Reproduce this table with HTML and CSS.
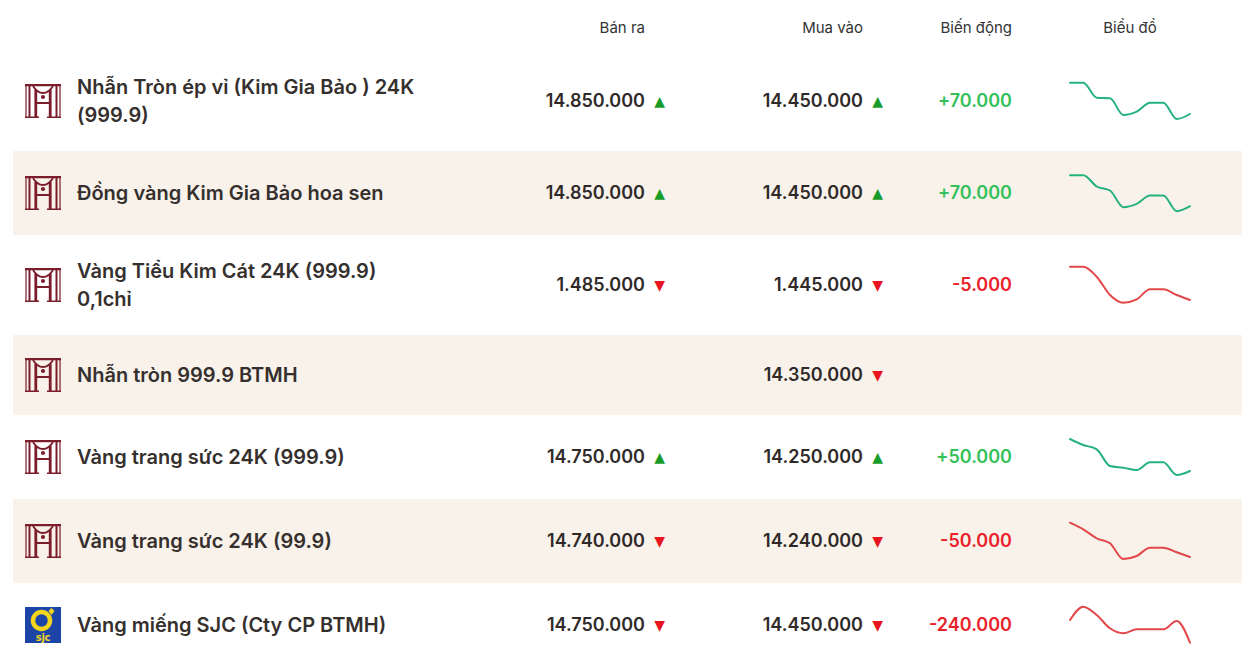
FILE: index.html
```html
<!DOCTYPE html>
<html lang="vi">
<head>
<meta charset="utf-8">
<title>Giá vàng</title>
<link rel="stylesheet" href="styles.css">
</head>
<body>
<svg class="defs" width="0" height="0" aria-hidden="true">
  <defs>
    <symbol id="mh" viewBox="0 0 36 34">
      <g fill="none" stroke="currentColor">
        <path d="M0 1.2H36" stroke-width="2.2"/>
        <path d="M1 1.2V33M35 1.2V33" stroke-width="1.2"/>
        <path d="M4.5 2V33M31.5 2V33" stroke-width="2"/>
        <path d="M8 2C11 7 14 9 18 9C22 9 25 7 28 2" stroke-width="1.8"/>
        <path d="M10.8 6V33M25.2 6V33" stroke-width="2.8"/>
        <path d="M10.8 19H25.2" stroke-width="2"/>
        <path d="M0 33.2H14M22 33.2H36" stroke-width="1.4"/>
      </g>
      <circle cx="18" cy="13" r="2.1" fill="currentColor"/>
    </symbol>
  </defs>
</svg>

<div class="board">
  <div class="row head">
    <div class="c-name"></div>
    <div class="c-price h-price">Bán ra</div>
    <div class="c-price h-price">Mua vào</div>
    <div class="c-change">Biến động</div>
    <div class="c-chart">Biểu đồ</div>
  </div>

  <div class="row item">
    <div class="c-name"><svg class="logo mh"><use href="#mh"/></svg><span class="pname">Nhẫn Tròn ép vỉ (Kim Gia Bảo ) 24K (999.9)</span></div>
    <div class="c-price"><span class="num">14.850.000</span><span class="arr up">▲</span></div>
    <div class="c-price"><span class="num">14.450.000</span><span class="arr up">▲</span></div>
    <div class="c-change pos">+70.000</div>
    <div class="c-chart"><svg class="spark green" viewBox="0 0 120 40"><path d="M0 1.7C4.4 1.7 8.9 1.7 13.3 1.7C17.8 1.7 22.3 16.3 26.7 16.7C31.1 17.1 35.6 16.9 40 17.3C44.4 17.7 48.9 34 53.3 34C57.8 34 62.2 32.75 66.7 30.7C71.1 28.65 75.6 21.7 80 21.7C84.4 21.7 88.9 21.7 93.3 21.7C97.8 21.7 102.2 38 106.7 38C111.1 38 115.6 35.5 120 33"/></svg></div>
  </div>

  <div class="row item alt">
    <div class="c-name"><svg class="logo mh"><use href="#mh"/></svg><span class="pname">Đồng vàng Kim Gia Bảo hoa sen</span></div>
    <div class="c-price"><span class="num">14.850.000</span><span class="arr up">▲</span></div>
    <div class="c-price"><span class="num">14.450.000</span><span class="arr up">▲</span></div>
    <div class="c-change pos">+70.000</div>
    <div class="c-chart"><svg class="spark green" viewBox="0 0 120 40"><path d="M0 2.2C4.4 2.2 8.9 2.2 13.3 2.2C17.8 2.2 22.3 10.95 26.7 13.5C31.1 16.05 35.6 14.83 40 17.5C44.4 20.17 48.9 34.2 53.3 34.2C57.8 34.2 62.2 32.75 66.7 30.8C71.1 28.85 75.6 22.5 80 22.5C84.4 22.5 88.9 22.5 93.3 22.5C97.8 22.5 102.2 38.2 106.7 38.2C111.1 38.2 115.6 35.7 120 33.2"/></svg></div>
  </div>

  <div class="row item">
    <div class="c-name"><svg class="logo mh"><use href="#mh"/></svg><span class="pname">Vàng Tiểu Kim Cát 24K (999.9) 0,1chỉ</span></div>
    <div class="c-price"><span class="num">1.485.000</span><span class="arr down">▼</span></div>
    <div class="c-price"><span class="num">1.445.000</span><span class="arr down">▼</span></div>
    <div class="c-change neg">-5.000</div>
    <div class="c-chart"><svg class="spark red" viewBox="0 0 120 40"><path d="M0 1.7C4.4 1.7 8.9 1.7 13.3 1.7C17.8 1.7 22.3 6.98 26.7 11.7C31.1 16.42 35.6 25.67 40 30C44.4 34.33 48.9 37.7 53.3 37.7C57.8 37.7 62.2 36.53 66.7 34.3C71.1 32.07 75.6 24.3 80 24.3C84.4 24.3 88.9 24.3 93.3 24.3C97.8 24.3 102.2 28.22 106.7 30C111.1 31.78 115.6 33.39 120 35"/></svg></div>
  </div>

  <div class="row item alt">
    <div class="c-name"><svg class="logo mh"><use href="#mh"/></svg><span class="pname">Nhẫn tròn 999.9 BTMH</span></div>
    <div class="c-price"></div>
    <div class="c-price"><span class="num">14.350.000</span><span class="arr down">▼</span></div>
    <div class="c-change"></div>
    <div class="c-chart"></div>
  </div>

  <div class="row item">
    <div class="c-name"><svg class="logo mh"><use href="#mh"/></svg><span class="pname">Vàng trang sức 24K (999.9)</span></div>
    <div class="c-price"><span class="num">14.750.000</span><span class="arr up">▲</span></div>
    <div class="c-price"><span class="num">14.250.000</span><span class="arr up">▲</span></div>
    <div class="c-change pos">+50.000</div>
    <div class="c-chart"><svg class="spark green" viewBox="0 0 120 40"><path d="M0 2C4.4 4.14 8.9 6.28 13.3 8C17.8 9.72 22.3 9.43 26.7 12.3C31.1 15.17 35.6 27.87 40 29C44.4 30.13 48.9 30.03 53.3 30.7C57.8 31.37 62.2 33 66.7 33C71.1 33 75.6 25.3 80 25.3C84.4 25.3 88.9 25.3 93.3 25.3C97.8 25.3 102.2 38 106.7 38C111.1 38 115.6 36 120 34"/></svg></div>
  </div>

  <div class="row item alt">
    <div class="c-name"><svg class="logo mh"><use href="#mh"/></svg><span class="pname">Vàng trang sức 24K (99.9)</span></div>
    <div class="c-price"><span class="num">14.740.000</span><span class="arr down">▼</span></div>
    <div class="c-price"><span class="num">14.240.000</span><span class="arr down">▼</span></div>
    <div class="c-change neg">-50.000</div>
    <div class="c-chart"><svg class="spark red" viewBox="0 0 120 40"><path d="M0 1.7C4.4 3.7 8.9 5.7 13.3 8.3C17.8 10.9 22.3 14.97 26.7 17.3C31.1 19.63 35.6 18.97 40 22.3C44.4 25.63 48.9 38 53.3 38C57.8 38 62.2 36.89 66.7 35C71.1 33.11 75.6 26.7 80 26.7C84.4 26.7 88.9 26.7 93.3 26.7C97.8 26.7 102.2 29.75 106.7 31.3C111.1 32.85 115.6 34.42 120 36"/></svg></div>
  </div>

  <div class="row item">
    <div class="c-name"><svg class="logo sjc" viewBox="0 0 36 36"><rect width="36" height="36" fill="#1d45a8"/><circle cx="16.5" cy="13.5" r="8.5" fill="none" stroke="#f3d51c" stroke-width="4.5"/><path d="M23.5 4L26.5 1L29.5 4L26.5 8Z" fill="#f3d51c"/><text x="18" y="34" text-anchor="middle" class="sjc-t">sjc</text></svg><span class="pname">Vàng miếng SJC (Cty CP BTMH)</span></div>
    <div class="c-price"><span class="num">14.750.000</span><span class="arr down">▼</span></div>
    <div class="c-price"><span class="num">14.450.000</span><span class="arr down">▼</span></div>
    <div class="c-change neg">-240.000</div>
    <div class="c-chart"><svg class="spark red" viewBox="0 0 120 40"><path d="M0 15C4.4 8.35 8.9 1.7 13.3 1.7C17.8 1.7 22.3 6.4 26.7 10C31.1 13.6 35.6 20.25 40 23.3C44.4 26.35 48.9 28.3 53.3 28.3C57.8 28.3 62.2 24.3 66.7 24.3C71.1 24.3 75.6 24.3 80 24.3C84.4 24.3 88.9 24.3 93.3 24.3C97.8 24.3 102.2 16 106.7 16C111.1 16 115.6 26.85 120 37.7"/></svg></div>
  </div>
</div>
</body>
</html>
```

FILE: styles.css
```css
* { box-sizing: border-box; }

html, body {
  margin: 0;
  background: #ffffff;
}

body {
  font-family: Inter, "Noto Sans", "DejaVu Sans", sans-serif;
  color: #332c2a;
}

.defs {
  position: absolute;
  width: 0;
  height: 0;
  overflow: hidden;
}

.board {
  padding: 0 9px 0 13px;
}

.row {
  display: grid;
  grid-template-columns: 1fr 145px 218px 129px 230px;
  align-items: center;
}

.head {
  padding: 18px 0 13px;
  font-size: 15px;
  line-height: 20px;
  color: #333333;
}

.item {
  padding: 22px 0;
}

.item.alt {
  background: #f9f2ea;
}

.c-name {
  display: flex;
  align-items: center;
  gap: 16px;
  padding-left: 12px;
}

.logo {
  flex: none;
  width: 36px;
  height: 36px;
}

.logo.mh {
  color: #7b1d2a;
}

.sjc-t {
  font-family: "DejaVu Sans", sans-serif;
  font-size: 10px;
  font-weight: 700;
  fill: #f3d51c;
  letter-spacing: -0.2px;
}

.pname {
  max-width: 345px;
  font-size: 20px;
  line-height: 28px;
  font-weight: 600;
  color: #35302e;
}

.c-price {
  text-align: right;
  font-size: 18px;
  line-height: 28px;
  font-weight: 600;
  color: #2f2a29;
}

.h-price {
  padding-right: 20px;
  font-size: 15px;
  line-height: 20px;
  font-weight: 400;
  color: #333333;
}

.arr {
  display: inline-block;
  width: 20px;
  font-size: 14px;
  text-align: right;
  vertical-align: 1px;
  font-family: "DejaVu Sans", sans-serif;
}

.arr.up { color: #179c2a; }
.arr.down { color: #e8141e; }

.c-change {
  text-align: right;
  font-size: 18px;
  line-height: 28px;
  font-weight: 600;
}

.head .c-change {
  font-size: 15px;
  line-height: 20px;
  font-weight: 400;
}

.c-change.pos { color: #34c15a; }
.c-change.neg { color: #e8222a; }

.c-chart {
  display: flex;
  justify-content: center;
  padding-left: 6px;
}

.spark {
  width: 120px;
  height: 40px;
  overflow: visible;
}

.spark path {
  fill: none;
  stroke-width: 2;
  stroke-linecap: round;
  stroke-linejoin: round;
}

.spark.green path { stroke: #25b27e; }
.spark.red path { stroke: #e2474a; }
```
